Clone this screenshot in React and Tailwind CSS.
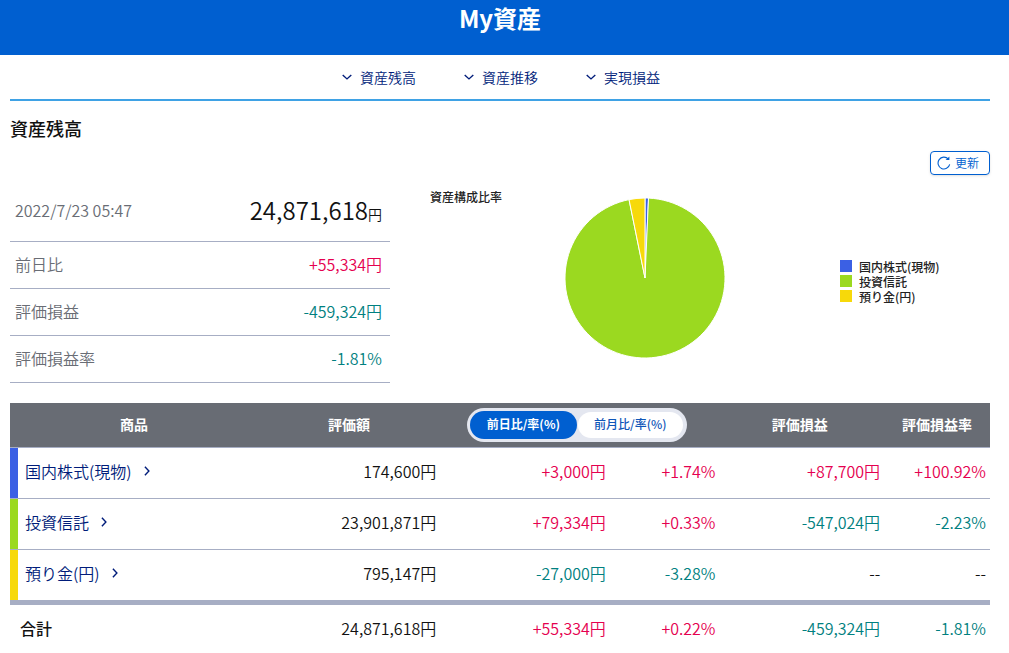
import { useState } from "react";

const NAV = ["資産残高", "資産推移", "実現損益"];

const SUMMARY = [
  { label: "前日比", value: "+55,334円" },
  { label: "評価損益", value: "-459,324円" },
  { label: "評価損益率", value: "-1.81%" },
];

const HOLDINGS = [
  { name: "国内株式(現物)", amount: 174600, color: "#3b60e4", bar: "bg-[#3b60e4]", cells: ["174,600円", "+3,000円", "+1.74%", "+87,700円", "+100.92%"] },
  { name: "投資信託", amount: 23901871, color: "#9bd920", bar: "bg-[#9bd920]", cells: ["23,901,871円", "+79,334円", "+0.33%", "-547,024円", "-2.23%"] },
  { name: "預り金(円)", amount: 795147, color: "#f7d90a", bar: "bg-[#f7d90a]", cells: ["795,147円", "-27,000円", "-3.28%", "--", "--"] },
];

const TOTAL = ["24,871,618円", "+55,334円", "+0.22%", "-459,324円", "-1.81%"];

function tone(value) {
  if (value.startsWith("+")) return "text-[#e5004f]";
  if (value.startsWith("-") && value !== "--") return "text-[#008080]";
  return "text-[#111111]";
}

function Chevron({ className }) {
  return (
    <svg viewBox="0 0 10 10" className={className} fill="none" stroke="currentColor" strokeWidth="1.4" aria-hidden="true">
      <path d="M0.7 2.9 L5 6.9 L9.3 2.9" />
    </svg>
  );
}

function RefreshIcon() {
  return (
    <svg viewBox="0 0 14 14" className="size-3.5" fill="none" stroke="currentColor" strokeWidth="1.1" aria-hidden="true">
      <path d="M12.7 8.4 A5.9 5.9 0 1 1 11.2 2.9" />
      <path d="M8.6 3.9 H12.4 V0.6 Z" fill="currentColor" stroke="none" />
    </svg>
  );
}

function Pie() {
  const total = HOLDINGS.reduce((sum, h) => sum + h.amount, 0);
  const point = (f) => [80 + 80 * Math.sin(2 * Math.PI * f), 80 - 80 * Math.cos(2 * Math.PI * f)];
  let start = 0;
  return (
    <svg viewBox="0 0 160 160" className="size-40 shrink-0" role="img" aria-label="資産構成比率">
      {HOLDINGS.map((h) => {
        const end = start + h.amount / total;
        const [x1, y1] = point(start);
        const [x2, y2] = point(end);
        const d = `M80 80 L${x1} ${y1} A80 80 0 ${end - start > 0.5 ? 1 : 0} 1 ${x2} ${y2} Z`;
        start = end;
        return <path key={h.name} d={d} fill={h.color} stroke="#fff" strokeWidth="1" />;
      })}
    </svg>
  );
}

export default function App() {
  const [period, setPeriod] = useState("day");
  const toggle = (key) =>
    period === key
      ? "h-7 w-[107px] rounded-full bg-[#005fd0] pb-0.5 text-xs font-bold text-white"
      : "h-[26px] w-[105px] rounded-full bg-white pb-0.5 text-xs font-medium text-[#0f56b8]";

  return (
    <div className="bg-white font-['Noto_Sans_CJK_JP','Noto_Sans',sans-serif] text-base font-[350] text-[#111111]">
      <header className="h-[55px] bg-[#005fd0] pr-[9px] text-center">
        <h1 className="pt-0.5 text-2xl leading-8 font-bold text-white">My資産</h1>
      </header>

      <main className="pr-[19px] pl-2.5">
        <nav className="flex h-[46px] items-center justify-center gap-12 border-b-2 border-[#3fa2e5] pl-0.5 text-sm text-[#001c7a]">
          {NAV.map((item) => (
            <a key={item} href={"#" + item} className="flex items-center gap-2">
              <Chevron className="size-2.5" />
              {item}
            </a>
          ))}
        </nav>

        <h2 id="資産残高" className="pt-[15px] text-lg leading-6 font-medium">資産残高</h2>

        <div className="mt-[11px] flex justify-end">
          <button type="button" className="flex h-6 w-[60px] items-center gap-1 rounded border border-[#005fd0] pl-1.5 text-xs text-[#005fd0] shadow-sm">
            <RefreshIcon />
            更新
          </button>
        </div>

        <section className="flex gap-10 pt-[7px]">
          <dl className="w-[380px] shrink-0">
            <div className="flex h-[60px] items-center justify-between border-b border-[#a7aec4] pr-2 pb-[3px] pl-[5px]">
              <dt className="text-[#696d75]">2022/7/23 05:47</dt>
              <dd className="text-2xl">24,871,618<span className="text-sm">円</span></dd>
            </div>
            {SUMMARY.map((row) => (
              <div key={row.label} className="flex h-[47px] items-center justify-between border-b border-[#a7aec4] pr-2 pb-[3px] pl-[5px]">
                <dt className="text-[#696d75]">{row.label}</dt>
                <dd className={tone(row.value)}>{row.value}</dd>
              </div>
            ))}
          </dl>

          <div className="flex grow items-start pt-[5px] text-xs font-medium text-[#222222]">
            <h3 className="w-[135px] leading-5">資産構成比率</h3>
            <div className="flex grow items-center pt-[11px]">
              <Pie />
              <ul className="ml-[115px] pt-1.5">
                {HOLDINGS.map((h) => (
                  <li key={h.name} className="flex items-center gap-[7px] leading-[15px] whitespace-nowrap">
                    <span className={`size-3 ${h.bar}`} />
                    {h.name}
                  </li>
                ))}
              </ul>
            </div>
          </div>
        </section>

        <table className="mt-5 w-full table-fixed border-collapse text-right">
          <colgroup>
            <col className="w-[25.3%]" />
            <col className="w-[18.6%]" />
            <col className="w-[17.3%]" />
            <col className="w-[11.2%]" />
            <col className="w-[16.8%]" />
            <col className="w-[10.8%]" />
          </colgroup>
          <thead>
            <tr className="h-11 border-b border-[#a7aec4] bg-[#686c74] text-center text-sm text-white">
              <th scope="col" className="p-0 pb-0.5 font-bold">商品</th>
              <th scope="col" className="p-0 pb-0.5 font-bold">評価額</th>
              <th scope="col" colSpan={2} className="p-0 pr-1.5">
                <div className="flex justify-center">
                  <div className="flex h-[34px] w-[220px] items-center gap-px rounded-full bg-[#e4e7f0] px-[3px]">
                    <button type="button" aria-pressed={period === "day"} onClick={() => setPeriod("day")} className={toggle("day")}>前日比/率(%)</button>
                    <button type="button" aria-pressed={period === "month"} onClick={() => setPeriod("month")} className={toggle("month")}>前月比/率(%)</button>
                  </div>
                </div>
              </th>
              <th scope="col" className="p-0 pr-1 pb-0.5 font-bold">評価損益</th>
              <th scope="col" className="p-0 pb-0.5 font-bold">評価損益率</th>
            </tr>
          </thead>
          <tbody className="border-b-[5px] border-[#a7aec4]">
            {HOLDINGS.map((h) => (
              <tr key={h.name} className="h-[51px] border-b border-[#a7aec4] last:border-b-0">
                <th scope="row" className="p-0 text-left font-[350]">
                  <div className="flex h-[50px] items-center gap-[7px]">
                    <span className={`w-2 self-stretch ${h.bar}`} />
                    <a href={"#" + h.name} className="flex items-center gap-2.5 pb-1 text-[#001c7a]">
                      {h.name}
                      <Chevron className="size-2.5 -rotate-90" />
                    </a>
                  </div>
                </th>
                {h.cells.map((v, i) => (
                  <td key={i} className={`p-0 pr-1 pb-1 ${tone(v)}`}>{v}</td>
                ))}
              </tr>
            ))}
          </tbody>
          <tfoot>
            <tr className="h-[52px]">
              <th scope="row" className="p-0 pb-0.5 pl-2.5 text-left font-medium">合計</th>
              {TOTAL.map((v, i) => (
                <td key={i} className={`p-0 pr-1 pb-0.5 ${tone(v)}`}>{v}</td>
              ))}
            </tr>
          </tfoot>
        </table>
      </main>
    </div>
  );
}
